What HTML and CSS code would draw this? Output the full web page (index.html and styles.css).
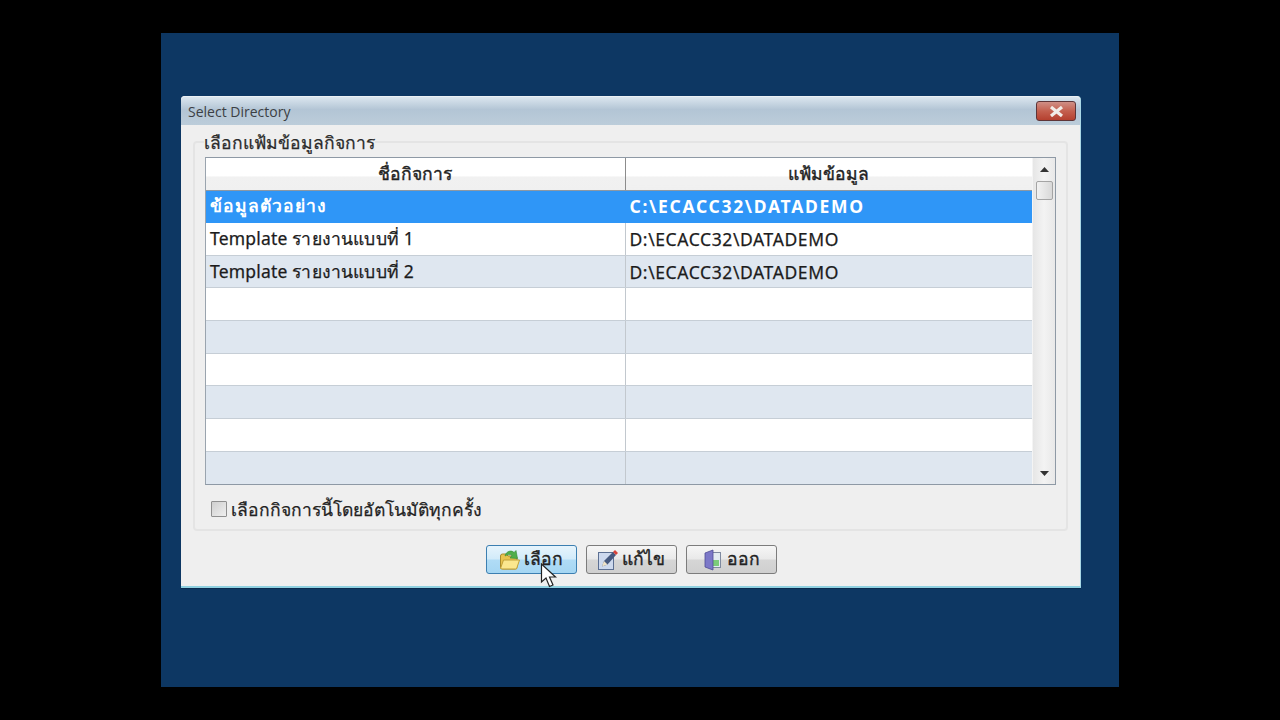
FILE: index.html
```html
<!DOCTYPE html>
<html lang="th">
<head>
<meta charset="UTF-8" />
<title>Select Directory</title>
<link rel="stylesheet" href="styles.css">
</head>
<body>
<div class="desktop">
  <div class="dialog">
    <div class="titlebar">
      <span class="title">Select Directory</span>
      <button class="close-btn"><svg width="15" height="11" viewBox="0 0 15 11"><path d="M2 1 L13 10 M13 1 L2 10" stroke="#f1ece8" stroke-width="3.2"/></svg></button>
    </div>
    <div class="dialog-body">
      <fieldset class="group">
        <legend>เลือกแฟ้มข้อมูลกิจการ</legend>
        <div class="grid-wrap">
          <table class="grid">
            <thead>
              <tr><th class="col-name">ชื่อกิจการ</th><th>แฟ้มข้อมูล</th></tr>
            </thead>
            <tbody>
              <tr class="selected"><td>ข้อมูลตัวอย่าง</td><td class="path">C:\ECACC32\DATADEMO</td></tr>
              <tr><td>Template รายงานแบบที่ 1</td><td class="path">D:\ECACC32\DATADEMO</td></tr>
              <tr><td>Template รายงานแบบที่ 2</td><td class="path">D:\ECACC32\DATADEMO</td></tr>
              <tr><td></td><td></td></tr>
              <tr><td></td><td></td></tr>
              <tr><td></td><td></td></tr>
              <tr><td></td><td></td></tr>
              <tr><td></td><td></td></tr>
              <tr><td></td><td></td></tr>
            </tbody>
          </table>
          <div class="scrollbar">
            <svg class="arrow" width="9" height="5" viewBox="0 0 9 5"><path d="M4.5 0 L9 5 H0 Z" fill="#333"/></svg>
            <div class="thumb"></div>
            <svg class="arrow arrow-down" width="9" height="5" viewBox="0 0 9 5"><path d="M0 0 H9 L4.5 5 Z" fill="#333"/></svg>
          </div>
        </div>
        <label class="auto-check"><span class="checkbox"></span>เลือกกิจการนี้โดยอัตโนมัติทุกครั้ง</label>
      </fieldset>
      <div class="buttons">
        <button class="btn btn-hover">
          <svg width="22" height="22" viewBox="0 0 22 22">
            <path d="M1.5 9 V18 Q1.5 20 3.5 20 H16 Q18 20 18 18 V9 Q18 7 16 7 H9 L7 5 H3.5 Q1.5 5 1.5 7 Z" fill="#e8c34f" stroke="#a88a2c"/>
            <path d="M1.5 19.5 L4.5 11 H20.5 L17.5 20 H3 Z" fill="#fbe78e" stroke="#c1a138"/>
            <path d="M6 7 C7 2.5 12 0.5 15 3.5 L17 1.5 L18.5 9.5 L11 9 L13 6.5 C11.5 5 8.5 5.5 6 7 Z" fill="#4fae4a" stroke="#2f8a35" stroke-width=".6"/>
          </svg>
          <span class="btn-label">เลือก</span>
        </button>
        <button class="btn">
          <svg width="22" height="22" viewBox="0 0 22 22">
            <rect x="1.5" y="3.5" width="15" height="17" fill="#cdd9ee" stroke="#5c6f92"/>
            <path d="M5 17.5 L7 12 L16 3 L19 6 L10.5 15.5 Z" fill="#46597f"/>
            <path d="M16 3 L18 1 L21 4 L19 6 Z" fill="#d8433a"/>
            <path d="M5 17.5 L7 12 L10.5 15.5 Z" fill="#efe3c8"/>
          </svg>
          <span class="btn-label">แก้ไข</span>
        </button>
        <button class="btn">
          <svg width="22" height="22" viewBox="0 0 22 22">
            <rect x="8.5" y="3.5" width="10" height="15" fill="#e3ebf1" stroke="#7f8aa0"/>
            <rect x="11" y="11" width="6" height="6" fill="#7ccb7a"/>
            <path d="M3 4 L11 1 V21 L3 18 Z" fill="#7c78c8" stroke="#4f4b96" stroke-width=".8"/>
          </svg>
          <span class="btn-label">ออก</span>
        </button>
      </div>
    </div>
  </div>
  <svg class="cursor" width="18" height="26" viewBox="0 0 18 26">
    <path d="M1.5 1 V19 L6 15 L9.5 23.5 L13 22 L9.5 14 H15.5 Z" fill="#fff" stroke="#222" stroke-width="1.2"/>
  </svg>
</div>
</body>
</html>
```

FILE: styles.css
```css
* { box-sizing: border-box; margin: 0; padding: 0; }
html, body { height: 100%; }
body {
  background: #000;
  font-family: 'Noto Sans', 'Liberation Sans', sans-serif;
  overflow: hidden;
}

.desktop {
  position: relative;
  width: 958px; height: 654px;
  margin: 33px 0 0 161px;
  padding: 63px 0 0 20px;
  background: #0d3763;
}

/* Dialog */
.dialog {
  width: 900px; height: 492px;
  display: flex; flex-direction: column;
  background: #efefef;
  border-radius: 4px 4px 0 0;
  border-bottom: 2px solid #8fd0e0;
  border-right: 1px solid #a9d8e6;
  box-shadow: 0 1px 0 #0a2a50;
}
.titlebar {
  height: 29px; flex: none;
  display: flex; align-items: center; justify-content: space-between;
  padding: 0 4px 0 7px;
  background: linear-gradient(#dbe6ef, #b3c5d5 45%, #bccdda);
  border-top: 1px solid #eaf0f5;
  border-radius: 4px 4px 0 0;
}
.title { font-size: 14px; color: #3c3f44; font-family: 'Open Sans', 'Noto Sans', sans-serif; }
.close-btn {
  width: 40px; height: 20px;
  display: flex; align-items: center; justify-content: center;
  background: linear-gradient(#cf8f86, #c4604f 50%, #b5402f);
  border: 1px solid #5e3538;
  border-radius: 3px;
}
.dialog-body { flex: 1; padding: 10px 13px 0 12px; }

/* Group box */
.group {
  height: 396px;
  border: 2px solid #e4e4e4;
  border-radius: 4px;
  padding: 8px 10px 0 10px;
}
.group legend {
  margin-left: -1px; padding: 0;
  font-size: 17.5px; line-height: 14px; color: #2a2a2a;
  -webkit-text-stroke: .25px #2a2a2a;
}

.grid-wrap {
  display: flex;
  width: 851px; height: 328px;
  border: 1px solid #8e99a5;
  border-left-color: #9aa4ae;
  background: #fff;
}
.grid {
  width: 826px; height: 326px;
  table-layout: fixed;
  border-collapse: collapse;
  font-size: 17.5px; color: #1c1c1c;
  -webkit-text-stroke: .25px #1c1c1c;
}
.grid th {
  height: 32px;
  font-weight: 400; font-size: 17.5px; color: #222;
  background: linear-gradient(#fff 55%, #f1f1f1 60%, #f0f0f0);
  border-bottom: 1px solid #8c98a4;
  border-left: 1px solid #8c8c8c;
  -webkit-text-stroke: .4px #222;
}
.grid th.col-name { width: 419px; border-left: 0; }
.grid td {
  height: 32.6px;
  padding: 0 4px;
  border-bottom: 1px solid #c6ced6;
  border-left: 1px solid #c2c8ce;
  white-space: nowrap;
  vertical-align: middle;
  letter-spacing: .18px;
}
.grid td.path { letter-spacing: .6px; }
.grid td:first-child { border-left: 0; }
.grid tbody tr:nth-child(odd) td { background: #dfe7f0; }
.grid tbody tr:nth-child(even) td { background: #fff; }
.grid tbody tr.selected td {
  background: #2f96f7;
  color: #fff; font-weight: 700;
  letter-spacing: 1.05px;
  -webkit-text-stroke: 0;
  border-left-color: #2f96f7;
  border-bottom-color: #2f96f7;
}
.grid tbody tr.selected td.path { letter-spacing: 1.7px; }
.grid tbody tr:last-child td { border-bottom: 0; }

.scrollbar {
  flex: 1;
  display: flex; flex-direction: column; align-items: center;
  background: linear-gradient(90deg, #e6e6e6, #f3f3f3 50%, #e8e8e8);
  padding: 9px 0 8px;
  border-left: 1px solid #f4f4f4;
}
.thumb {
  width: 17px; height: 19px;
  margin-top: 9px;
  background: linear-gradient(90deg, #f2f2f2, #d8d8d8);
  border: 1px solid #a4a4a4;
  border-radius: 2px;
}
.arrow-down { margin-top: auto; }

.auto-check {
  display: flex; align-items: center; gap: 4px;
  margin: 12px 0 0 6px;
  font-size: 17.5px; line-height: 24px; color: #222;
  -webkit-text-stroke: .25px #222;
}
.checkbox {
  width: 16px; height: 16px;
  background: linear-gradient(135deg, #cfcfcf, #efefef);
  border: 1px solid #8f8f8f;
  border-radius: 1px;
}

/* Buttons */
.buttons {
  display: flex; justify-content: center; gap: 9px;
  margin-top: 14px;
  padding-left: 2px;
}
.btn {
  width: 91px; height: 29px;
  display: flex; align-items: center; justify-content: center; gap: 3px;
  font-family: inherit; font-size: 17.5px; line-height: 20px; color: #222;
  -webkit-text-stroke: .35px #222;
  background: linear-gradient(#f6f6f6, #e9e9e9 48%, #d6d6d6 52%, #cfcfcf);
  border: 1px solid #7c7c7c;
  border-radius: 3px;
}
.btn-label { padding-bottom: 3px; }
.btn-hover {
  background: linear-gradient(#e6f4fc, #d2ebfa 48%, #b0dcf6 52%, #a5d6f3);
  border-color: #3c7fb1;
}

.cursor { position: absolute; left: 379px; top: 530px; }
```
